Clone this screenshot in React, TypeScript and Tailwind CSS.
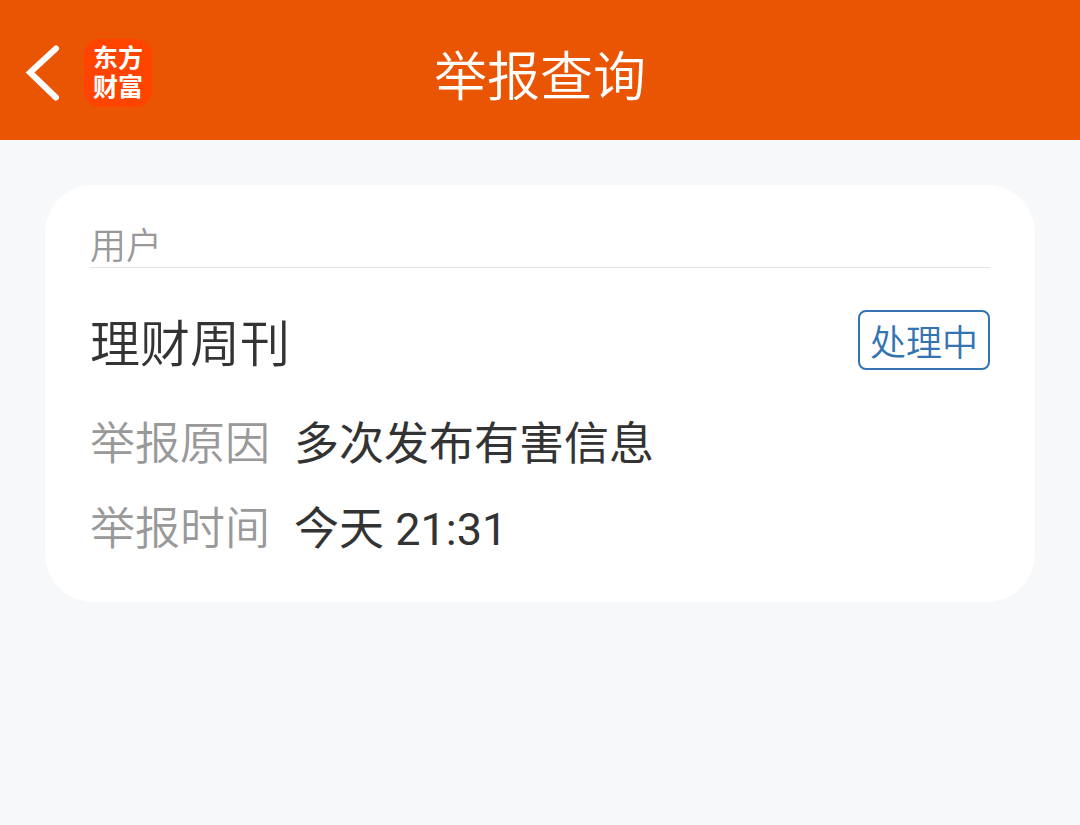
import React from "react";

const details = [
  { label: "举报原因", value: "多次发布有害信息" },
  { label: "举报时间", value: "今天 21:31" },
];

const ReportQuery = () => {
  return (
    <div className="min-h-screen bg-[#f6f8fa] font-['Noto_Sans_CJK_SC',sans-serif] font-[350] text-[#333]">
      <header className="grid grid-cols-[1fr_auto_1fr] items-center h-35 px-6 pt-1.5 bg-[#ea5504] text-white">
        <div className="flex items-center gap-5">
          <button type="button" aria-label="返回">
            <svg className="block w-10 h-16" viewBox="0 0 40 64" fill="none">
              <path
                d="M32 7.5 L6 31.5 L32 56.5"
                stroke="currentColor"
                strokeWidth="6"
                strokeLinecap="round"
              />
            </svg>
          </button>
          <a
            href="#"
            className="flex flex-col items-center justify-center w-17 h-17 rounded-2xl bg-[#ff4400] font-[Roboto,'Noto_Sans_CJK_SC',sans-serif] text-[25px] leading-[29px] font-bold"
          >
            <span>东方</span>
            <span>财富</span>
          </a>
        </div>
        <h1 className="text-[53px] leading-16">举报查询</h1>
      </header>

      <main className="p-[45px]">
        <section className="bg-white rounded-[48px] px-[45px] pt-[34px] pb-10">
          <p className="border-b border-[#e5e5e5] text-4xl leading-12 text-[#999]">
            用户
          </p>
          <div className="flex items-center justify-between mt-10">
            <h2 className="text-[50px] leading-16">理财周刊</h2>
            <span className="border-2 border-[#3574b2] rounded-lg px-2.5 text-4xl leading-14 text-[#3574b2]">
              处理中
            </span>
          </div>
          <dl className="mt-10 flex flex-col gap-5 font-[Roboto,'Noto_Sans_CJK_SC',sans-serif] text-[45px] leading-[65px]">
            {details.map((item) => (
              <div key={item.label} className="flex gap-6">
                <dt className="text-[#999]">{item.label}</dt>
                <dd className="font-normal">{item.value}</dd>
              </div>
            ))}
          </dl>
        </section>
      </main>
    </div>
  );
};

export default ReportQuery;
